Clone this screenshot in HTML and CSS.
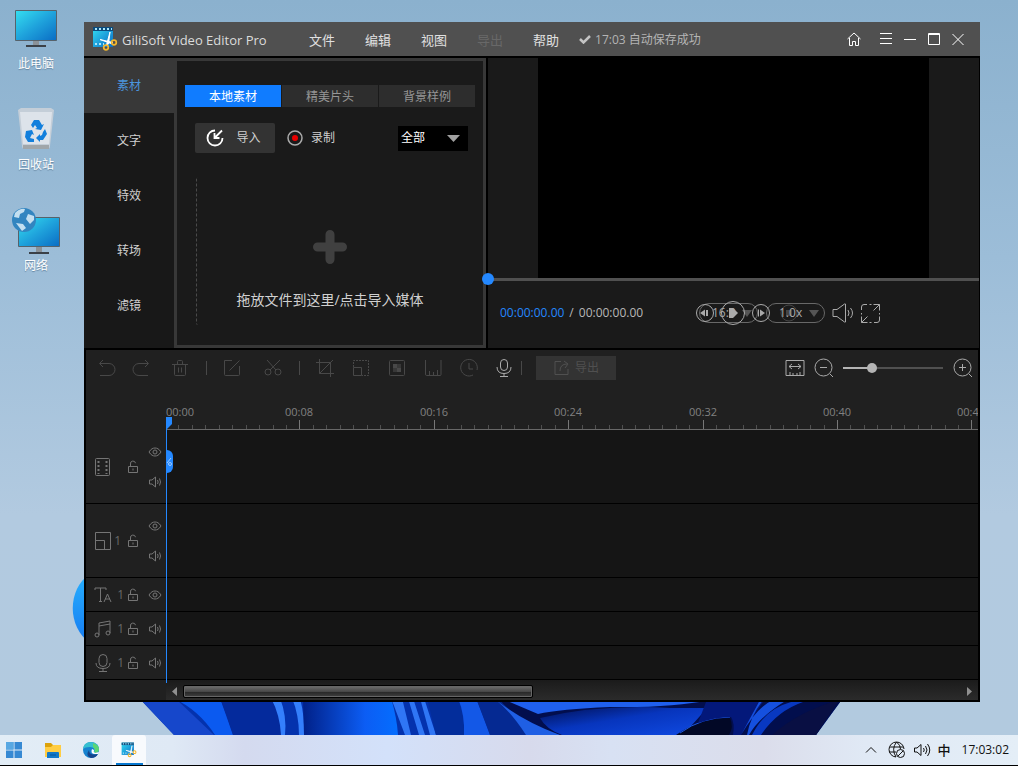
FILE: index.html
```html
<!DOCTYPE html>
<html lang="zh-CN">
<head>
<meta charset="utf-8">
<meta name="viewport" content="width=device-width, initial-scale=1">
<title>GiliSoft Video Editor Pro</title>
<link rel="stylesheet" href="styles.css">
</head>
<body>
<svg width="0" height="0" class="defs" aria-hidden="true">
  <defs>
    <linearGradient id="screen" x1="0" y1="0" x2="1" y2="1"><stop offset="0" stop-color="#35dff0"/><stop offset=".5" stop-color="#1fa3dc"/><stop offset="1" stop-color="#0a6cc4"/></linearGradient>
    <symbol id="lock" viewBox="0 0 12 14"><path d="M1.5 6.500h9v6h-9zM3.500 6V4a2.500 2.500 0 0 1 5-.8M6 8.500v2"/></symbol>
    <symbol id="eye" viewBox="0 0 14 10"><path d="M1 5C3 1.800 5 1 7 1s4 .8 6 4C11 8.200 9 9 7 9S3 8.200 1 5z"/><circle cx="7" cy="5" r="2"/></symbol>
    <symbol id="speaker" viewBox="0 0 14 12"><path d="M1.500 4v4H4l3.500 3V1L4 4zM9.500 4q1.300 2 0 4M11.500 2.500q2 3.500 0 7"/></symbol>
    <symbol id="logo" viewBox="0 0 26 26"><path d="M1 1h20v20H1z" fill="url(#screen)"/><path d="M1 3h20" stroke="#0b4b7c" stroke-width="4"/><path d="M3 3h17M3 18h9" stroke="#a9e6fa" stroke-width="2" stroke-dasharray="2 2"/><path d="M8 13.500l13 3-2 1zM18 6l-3.500 13 2-1z" fill="#fff" stroke="#fff"/><circle cx="22" cy="16.500" r="2.300" fill="none" stroke="#f5b72c" stroke-width="1.700"/><circle cx="14" cy="21.500" r="2.300" fill="none" stroke="#f5b72c" stroke-width="1.700"/></symbol>
  </defs>
</svg>
<main class="desktop">
  <svg class="wallpaper" viewBox="0 0 1018 735" preserveAspectRatio="none" aria-hidden="true">
    <defs>
      <linearGradient id="sky" x1="0" y1="0" x2="0" y2="1"><stop offset="0" stop-color="#8bb1ce"/><stop offset=".35" stop-color="#9cbdd8"/><stop offset=".7" stop-color="#b2cae0"/><stop offset="1" stop-color="#b2cadf"/></linearGradient>
      <linearGradient id="glow" x1="300" x2="400" y1="0" y2="0" gradientUnits="userSpaceOnUse"><stop offset="0" stop-color="#001d82"/><stop offset=".65" stop-color="#0c5df4"/><stop offset="1" stop-color="#046fff"/></linearGradient>
      <linearGradient id="fold" x1="0" y1="0" x2="1" y2="1"><stop offset="0" stop-color="#010f50"/><stop offset=".45" stop-color="#0735bd"/><stop offset="1" stop-color="#104be3"/></linearGradient>
      <linearGradient id="petal" x1="0" y1="0" x2="0" y2="1"><stop offset="0" stop-color="#27b0ff"/><stop offset="1" stop-color="#167bf1"/></linearGradient>
    </defs>
    <path d="M0 0h1018v735H0z" fill="url(#sky)"/>
    <path d="M90 574c-23 15-23 53 0 69z" fill="url(#petal)"/>
    <path d="M139 698h704l-27 37H174z" fill="#0432ad"/>
    <path d="M139 698h36l39 37h-40z" fill="#1647cb"/>
    <path d="M173 698h47q7 17 13 37h-18q-16-25-42-37z" fill="#0b5af0"/>
    <path d="M220 698h53q9 15 9 37h-49z" fill="#042a9c"/>
    <path d="M271 698h9q7 18 5 37h-4q-1-20-10-37zM292 698h8q5 20 4 37h-5q0-20-7-37z" fill="#347ffc"/>
    <path d="M303 698h88q6 20 7 37h-94z" fill="url(#glow)"/>
    <path d="M391 698h11l9 37h-6zM408 698h5l12 37h-6zM420 698h4l12 37h-6z" fill="#2f76f5"/>
    <path d="M427 698h31q7 20 6 37h-28z" fill="#032d9b"/>
    <path d="M458 698h18q8 20 14 37h-26q1-20-6-37z" fill="#1358e7"/>
    <path d="M476 698h22q16 17 40 37h-48z" fill="#052992"/>
    <path d="M498 698h345l-27 37H560q-40-10-62-37z" fill="#020e4d"/>
    <path d="M496 700q15 12 30 35h34q-36-13-64-35z" fill="#1f5fe4"/>
    <path d="M505 700h205q-38 8-100 7-50 2-72 7z" fill="#1f60ee"/>
    <path d="M540 718q60-14 130-10h38l-8 8-17 19H562q-16-6-22-17z" fill="url(#fold)"/>
    <path d="M676 735q24-17 54-17 4 9-1 17z" fill="#020826"/>
    <path d="M680 733q22-16 50-16" fill="none" stroke="#1c58df"/>
    <path d="M706 702h57l-22 33h-8q2-12-2-18-16 0-33 6z" fill="#03187a"/>
    <path d="M760 700l-19 35h6q3-18 16-35zM787 700q-28 17-38 35h-8q16-28 32-35z" fill="#1550df"/>
    <path d="M803 702q-26 9-42 33h-9q13-26 39-33z" fill="#0838c1"/>
    <path d="M839 700l-23 35h-44q27-24 67-35z" fill="#090f43"/>
  </svg>

  <div class="shortcuts">
    <a class="shortcut" href="#pc">
      <svg viewBox="0 0 56 48"><path d="M7.500 4.500h41v30h-41z" fill="url(#screen)" stroke="#56626b"/><path d="M25 35h6v4h-6z" fill="#8b9298"/><path d="M18 39h20v2H18z" fill="#3b4148"/></svg>
      <span>此电脑</span>
    </a>
    <a class="shortcut" href="#bin">
      <svg viewBox="0 0 56 48"><path d="M10 3l3-2h30l3 2-4 36q0 3-3 3H17q-3 0-3-3z" fill="#c4ced8"/><path d="M12 5h32l-3 32H15z" fill="#dde3ea"/><path d="M15 38h26v4H15z" fill="#a0a6aa"/><path d="M23 18l3-5h5l3 5 2-1-3 6-6-1 2-1-2-3-2 3zM18 24l6-1 2 5-2-1-2 4 4 1v3h-6l-3-5zM37 22l2 5-4 6h-3v2l-4-4 4-4v2l2-1 1-3z" fill="#127fdc"/></svg>
      <span>回收站</span>
    </a>
    <a class="shortcut" href="#network">
      <svg viewBox="0 0 56 48"><path d="M10.500 9.500h41v29h-41z" fill="url(#screen)" stroke="#56626b"/><path d="M28 39h6v5h-6z" fill="#8b9298"/><path d="M21 44h20v2H21z" fill="#3b4148"/><circle cx="16" cy="12" r="12" fill="#3285c0"/><path d="M7 5q5-5 10-4l-1 3-4 2-1 4-5-1zM20 6l6 2v4l-4 4-4-5zM8 15l7 1 3 4-4 3z" fill="#c3dff0"/></svg>
      <span>网络</span>
    </a>
  </div>

  <section class="window">
    <header class="titlebar">
      <div class="brand"><svg class="logo"><use href="#logo"/></svg><h1>GiliSoft Video Editor Pro</h1></div>
      <nav class="menu">
        <button>文件</button><button>编辑</button><button>视图</button><button disabled>导出</button><button>帮助</button>
      </nav>
      <div class="autosave"><svg viewBox="0 0 12 10"><path d="M1 5l3.500 3.500L11 2" fill="none" stroke="#c4c4c4" stroke-width="2.500"/></svg><span>17:03 自动保存成功</span></div>
      <div class="window-buttons">
        <button class="home" aria-label="主页"><svg viewBox="0 0 14 14"><path d="M.5 7L7 1l6.500 6M2.500 6v7.500h3v-4h3v4h3V6"/></svg></button>
        <button aria-label="菜单"><svg viewBox="0 0 14 14"><path d="M1 1.500h12M1 6.500h12M1 11.500h12"/></svg></button>
        <button aria-label="最小化"><svg viewBox="0 0 14 14"><path d="M1 7.500h12"/></svg></button>
        <button aria-label="最大化"><svg viewBox="0 0 14 14"><path d="M1.500 1.500h11v11h-11zM1 2.500h12"/></svg></button>
        <button aria-label="关闭"><svg viewBox="0 0 14 14"><path d="M1.500 2l11 11M12.500 2l-11 11"/></svg></button>
      </div>
    </header>

    <div class="upper">
      <nav class="sidebar">
        <button class="active">素材</button><button>文字</button><button>特效</button><button>转场</button><button>滤镜</button>
      </nav>
      <section class="library">
        <div class="tabs" role="tablist">
          <button role="tab" aria-selected="true">本地素材</button><button role="tab" aria-selected="false">精美片头</button><button role="tab" aria-selected="false">背景样例</button>
        </div>
        <div class="library-actions">
          <button class="import"><svg viewBox="0 0 18 18"><path d="M9 1.500a7.500 7.500 0 1 0 7.500 7.500" fill="none" stroke="#fff" stroke-width="1.800"/><path d="M16 1.500L9.500 8M8.500 4v5h5" fill="none" stroke="#fff" stroke-width="1.800"/></svg>导入</button>
          <button class="record"><svg viewBox="0 0 16 16"><circle cx="8" cy="8" r="7" fill="none" stroke="#aaa" stroke-width="1.500"/><circle cx="8" cy="8" r="3" fill="#e80000"/></svg>录制</button>
          <div class="filter"><select aria-label="素材类型"><option>全部</option></select><svg viewBox="0 0 13 8"><path d="M0 0h13L6.500 7z" fill="#a0a0a0"/></svg></div>
        </div>
        <button class="dropzone">
          <svg viewBox="0 0 34 34"><path d="M17 4.500v25M4.500 17h25" stroke="#404040" stroke-width="9" stroke-linecap="round"/></svg>
          <span>拖放文件到这里/点击导入媒体</span>
        </button>
      </section>
      <section class="preview">
        <div class="video"></div>
        <input class="seek" type="range" min="0" max="100" value="0" aria-label="播放进度">
        <div class="player">
          <div class="time"><span class="current">00:00:00.00</span><span>/</span><span>00:00:00.00</span></div>
          <div class="player-controls">
            <div class="pills">
              <div class="pill"><select aria-label="画面比例"><option>16:9</option></select><svg viewBox="0 0 10 7"><path d="M0 0h10L5 7z"/></svg></div>
              <div class="pill"><select aria-label="播放速度"><option>1.0x</option></select><svg viewBox="0 0 10 7"><path d="M0 0h10L5 7z"/></svg></div>
              <div class="transport">
                <button aria-label="上一帧"><svg viewBox="0 0 26 26"><circle cx="13" cy="13" r="8.500"/><path class="fill" d="M8 13l5-3.500v7zM14 10h2v6h-2z"/></svg></button>
                <button aria-label="播放"><svg viewBox="0 0 26 26"><circle cx="13" cy="13" r="11.500"/><path class="fill" d="M9 8h4l5 5-5 5H9z"/></svg></button>
                <button aria-label="下一帧"><svg viewBox="0 0 26 26"><circle cx="13" cy="13" r="8.500"/><path class="fill" d="M10 9.500v7h1v-7zM12 9.500v7l5-3.500z"/></svg></button>
                <button aria-label="停止" disabled><svg viewBox="0 0 26 26"><circle cx="13" cy="13" r="8"/><path class="fill" d="M10 10h6v6h-6z"/></svg></button>
              </div>
            </div>
            <button aria-label="音量"><svg width="22" height="20" viewBox="0 0 22 20"><path d="M1 6.500v7h4L12.500 19h1V1h-1L5 6.500zM16 7q2 3 0 6M18.500 5q4 5 0 10"/></svg></button>
            <button aria-label="全屏"><svg width="19" height="19" viewBox="0 0 19 19"><path d="M.5 6V3q0-2.500 2.500-2.500h3M12.500.5h6v6M18.500 12.500V16q0 2.500-2.500 2.500h-3M6.500 18.500h-6v-6M8.500.5h2M8.500 18.500h2M.5 9v1.500M18.500 9v1.500M12.500 6.500l6-6M6.500 12.500l-6 6"/></svg></button>
          </div>
        </div>
      </section>
    </div>

    <section class="timeline">
      <div class="toolbar">
        <div class="tools">
          <button disabled aria-label="撤销"><svg viewBox="0 0 20 20"><path d="M6 2L2.500 5.500 6 9M3 5.500h9a5.500 5.500 0 0 1 0 12H3"/></svg></button>
          <button disabled aria-label="重做"><svg viewBox="0 0 20 20"><path d="M14 2l3.500 3.500L14 9M17 5.500H8a5.500 5.500 0 0 0 0 12h9"/></svg></button>
          <button disabled aria-label="删除"><svg viewBox="0 0 20 20"><path d="M2 6.500h16M7.500 6V3.500q0-1 1-1h3q1 0 1 1V6M4.500 6.500v10q0 1 1 1h9q1 0 1-1v-10M8.500 9.500v5M11.500 9.500v5"/></svg></button>
          <i class="rule"></i>
          <button disabled aria-label="编辑"><svg viewBox="0 0 20 20"><path d="M10 2.500H2.500v14q0 1 1 1h13q1 0 1-1V8M7.500 12.500l10-10"/></svg></button>
          <button disabled aria-label="分割"><svg viewBox="0 0 20 20"><circle cx="5" cy="14" r="3"/><circle cx="15" cy="14" r="3"/><path d="M4 2l9 10M17 2L7 12"/></svg></button>
          <i class="rule"></i>
          <button disabled aria-label="裁剪"><svg viewBox="0 0 20 20"><path d="M1 4.500h14.500V19M4.500 1v14.500H19M18 2L4.500 15.500"/></svg></button>
          <button disabled aria-label="缩放"><svg viewBox="0 0 20 20"><path d="M2.500 9V2.500h15v15H11" stroke-dasharray="2 1"/><path d="M2.500 9.500h8v8h-8z"/></svg></button>
          <button disabled aria-label="马赛克"><svg viewBox="0 0 20 20"><rect x="2.500" y="2.500" width="15" height="15" rx="1"/><path d="M6 6h4v4H6zM10 10h4v4h-4z" fill="#484848" stroke="none"/><path d="M10 6h4v4h-4zM6 10h4v4H6z" fill="#383838" stroke="none"/></svg></button>
          <button disabled aria-label="标尺"><svg viewBox="0 0 20 20"><path d="M2.500 2v14q0 1.500 1 1.500h13.500q1 0 1-1V2M6.500 17v-4M10.500 17v-3M14.500 17v-5"/></svg></button>
          <button disabled aria-label="时长"><svg viewBox="0 0 20 20"><path d="M14 17A8.300 8.300 0 1 1 18 12M10 5v6h4"/></svg></button>
          <button class="bright" aria-label="录音"><svg viewBox="0 0 20 20"><rect x="6.500" y="1.500" width="7" height="11" rx="3.500"/><path d="M3 9q0 6.500 7 6.500T17 9M10 15.500V18M6 18.500h8"/></svg></button>
          <i class="rule"></i>
        </div>
        <button class="export" disabled><svg viewBox="0 0 18 18"><path d="M8 2.500H2v13h13V10M7 12q0-7 7-7M11 2l4 3-3 4"/></svg>导出</button>
        <div class="zoom">
          <button class="bright" aria-label="适应窗口"><svg viewBox="0 0 20 20"><path d="M1 2.500h18v15H1zM5 17v-3M8 17v-2M12 17v-2M15 17v-3M4 8.500h12M7 6L4 8.500 7 11M13 6l3 2.500-3 2.500"/></svg></button>
          <button class="bright" aria-label="缩小"><svg viewBox="0 0 20 20"><circle cx="9.500" cy="9.500" r="8.500"/><path d="M6 9.500h7M16 16l3 3"/></svg></button>
          <input class="scale" type="range" min="0" max="100" value="27" aria-label="时间线缩放">
          <button class="bright" aria-label="放大"><svg viewBox="0 0 20 20"><circle cx="9.500" cy="9.500" r="8.500"/><path d="M6 9.500h7M9.500 6v7M16 16l3 3"/></svg></button>
        </div>
      </div>

      <div class="tracks">
        <div class="ruler">
          <svg height="44" aria-label="时间刻度">
            <text x="0" y="30">00:00</text>
            <g text-anchor="middle"><text x="133" y="30">00:08</text><text x="268" y="30">00:16</text><text x="402" y="30">00:24</text><text x="537" y="30">00:32</text><text x="671" y="30">00:40</text><text x="805" y="30">00:48</text></g>
            <path class="minor" d="M12.5 39v4M26.5 39v4M39.5 39v4M53.5 39v4M66.5 39v4M80.5 39v4M93.5 39v4M107.5 39v4M120.5 39v4M147.5 39v4M160.5 39v4M174.5 39v4M187.5 39v4M201.5 39v4M214.5 39v4M228.5 39v4M241.5 39v4M254.5 39v4M281.5 39v4M295.5 39v4M308.5 39v4M322.5 39v4M335.5 39v4M348.5 39v4M362.5 39v4M375.5 39v4M389.5 39v4M416.5 39v4M429.5 39v4M443.5 39v4M456.5 39v4M469.5 39v4M483.5 39v4M496.5 39v4M510.5 39v4M523.5 39v4M550.5 39v4M563.5 39v4M577.5 39v4M590.5 39v4M604.5 39v4M617.5 39v4M631.5 39v4M644.5 39v4M658.5 39v4M684.5 39v4M698.5 39v4M711.5 39v4M725.5 39v4M738.5 39v4M752.5 39v4M765.5 39v4M779.5 39v4M792.5 39v4"/>
            <path class="major" d="M133.5 34v9M268.5 34v9M402.5 34v9M537.5 34v9M671.5 34v9M805.5 34v9"/>
          </svg>
        </div>
        <div class="track tall">
          <div class="head"><svg class="kind" viewBox="0 0 18 18"><rect x="1.500" y=".5" width="14" height="17" rx="1"/><path d="M4.500 3v13M12.500 3v13" stroke-width="2" stroke-dasharray="2 2"/></svg><span></span><button aria-label="锁定"><svg class="lock"><use href="#lock"/></svg></button><div class="toggles"><button aria-label="显示"><svg class="eye"><use href="#eye"/></svg></button><button aria-label="静音"><svg class="speaker"><use href="#speaker"/></svg></button></div></div>
          <div class="lane"></div>
        </div>
        <div class="track tall">
          <div class="head"><svg class="kind" viewBox="0 0 18 18"><path d="M1.500.5h15v17h-15zM1.500 8.500h9v9"/></svg><span class="near">1</span><button aria-label="锁定"><svg class="lock"><use href="#lock"/></svg></button><div class="toggles"><button aria-label="显示"><svg class="eye"><use href="#eye"/></svg></button><button aria-label="静音"><svg class="speaker"><use href="#speaker"/></svg></button></div></div>
          <div class="lane"></div>
        </div>
        <div class="track">
          <div class="head"><svg class="kind" viewBox="0 0 18 18"><path d="M1 4V2h11v2M6.500 2v13M5 15.500h3M10 16l3.500-8 3.500 8M11 13h5"/></svg><span>1</span><button aria-label="锁定"><svg class="lock"><use href="#lock"/></svg></button><div class="toggles"><button aria-label="显示"><svg class="eye"><use href="#eye"/></svg></button></div></div>
          <div class="lane"></div>
        </div>
        <div class="track">
          <div class="head"><svg class="kind" viewBox="0 0 18 18"><path d="M5 15V3l11-2v12M5 6l11-2"/><circle cx="3" cy="15" r="2"/><circle cx="14" cy="13" r="2"/></svg><span>1</span><button aria-label="锁定"><svg class="lock"><use href="#lock"/></svg></button><div class="toggles"><button aria-label="静音"><svg class="speaker"><use href="#speaker"/></svg></button></div></div>
          <div class="lane"></div>
        </div>
        <div class="track">
          <div class="head"><svg class="kind" viewBox="0 0 18 18"><rect x="5" y=".5" width="8" height="12" rx="4"/><path d="M2 9q0 5.500 7 5.500T16 9M9 14.500V17M5 17.500h8"/></svg><span>1</span><button aria-label="锁定"><svg class="lock"><use href="#lock"/></svg></button><div class="toggles"><button aria-label="静音"><svg class="speaker"><use href="#speaker"/></svg></button></div></div>
          <div class="lane"></div>
        </div>
        <div class="playhead">
          <svg class="marker" viewBox="0 0 6 12"><path d="M0 0h6v7l-5 5H0z" fill="#2488ff"/></svg>
          <button class="split" aria-label="在此分割"><svg viewBox="0 0 7 24"><path d="M5 8L1 13" stroke="#9ccaff"/><circle cx="4" cy="14" r="1.500" fill="none" stroke="#9ccaff"/></svg></button>
        </div>
        <div class="scroll">
          <button aria-label="向左滚动"><svg viewBox="0 0 5 9"><path d="M5 0v9L0 4.500z"/></svg></button>
          <div class="groove"><div class="thumb"></div></div>
          <button aria-label="向右滚动"><svg viewBox="0 0 5 9"><path d="M0 0v9l5-4.500z"/></svg></button>
        </div>
      </div>
    </section>
  </section>
</main>

<footer class="taskbar">
  <div class="pinned">
    <button aria-label="开始"><svg viewBox="0 0 18 18"><path d="M1 1h7.500v7.500H1zM9.500 1H17v7.500H9.500zM1 9.500h7.500V17H1zM9.500 9.500H17V17H9.500z" fill="#3689d3"/><path d="M1 1h7.500v7.500H1z" fill="#58a8e2"/></svg></button>
    <button aria-label="文件资源管理器"><svg viewBox="0 0 18 18"><path d="M1 2h6l2 2h8v3H1z" fill="#dca20c"/><path d="M1 6h6l2-2h8v12H1z" fill="#ffcd43"/><path d="M3 12q0-1 1-1h10q1 0 1 1v5H3z" fill="#1278c7"/><path d="M6 14h6" stroke="#07559a"/></svg></button>
    <button aria-label="Edge"><svg viewBox="0 0 18 18"><circle cx="9" cy="9" r="8" fill="#1682cf"/><path d="M1 8q1-7 8-7 8 1 8 7 0 4-5 4 2-6-4-6-5 0-7 2z" fill="#35bfd0"/><path d="M11 2q6 2 6 6t-5 4q2-4-1-6z" fill="#5bd575"/><path d="M7 9q0 6 9 4-2 4-7 4-6-2-2-8z" fill="#16458c"/><path d="M10 8q-2 5 3 5h3l1-2-4 1q-2-1-1-3z" fill="#fff"/></svg></button>
    <button class="running" aria-label="GiliSoft Video Editor Pro"><svg viewBox="0 0 26 26"><use href="#logo" width="26" height="26"/></svg></button>
  </div>
  <div class="tray">
    <button aria-label="显示隐藏的图标"><svg width="12" height="8" viewBox="0 0 12 8"><path d="M1 6.500l5-5 5 5"/></svg></button>
    <button aria-label="网络"><svg width="18" height="18" viewBox="0 0 18 18"><path d="M8 16A7.500 7.500 0 1 1 16 8M2 6h13M1 11h7M8.500 1Q3 8 8 16M8.500 1q4 3 4 7"/><circle cx="12.500" cy="12.500" r="4"/><path d="M10 15l5-5"/></svg></button>
    <button aria-label="音量"><svg width="18" height="16" viewBox="0 0 18 16"><path d="M1.500 6v4H4l4 3.500v-11L4 6zM10.500 6q1.500 2 0 4M12.500 4q3 4 0 8M14.500 2q4.500 6 0 12"/></svg></button>
    <button class="ime">中</button>
    <time>17:03:02</time>
  </div>
</footer>
</body>
</html>
```

FILE: styles.css
```css
* { box-sizing: border-box; }

html, body { height: 100%; }

body {
  margin: 0;
  display: flex;
  flex-direction: column;
  font: 12px/18px "Open Sans", "Noto Sans CJK SC", sans-serif;
  color: #d0d0d0;
  background: #b2cadf;
}

button, select, input { font: inherit; color: inherit; margin: 0; }

button {
  display: flex;
  align-items: center;
  justify-content: center;
  padding: 0;
  border: 0;
  background: none;
}

svg { display: block; flex: none; }
.defs { position: absolute; }

/* Desktop */
.desktop { position: relative; flex: 1; min-height: 702px; }
.wallpaper { position: absolute; inset: 0; width: 100%; height: 100%; }

.shortcuts { position: relative; width: 72px; }
.shortcut {
  display: flex;
  flex-direction: column;
  align-items: center;
  gap: 1px;
  height: 101px;
  padding-top: 6px;
  color: #fff;
  text-decoration: none;
}
.shortcut svg { width: 56px; height: 48px; }
.shortcut span { text-shadow: 0 1px 1px #6484a0; }

/* Application window */
.window {
  position: absolute;
  top: 22px;
  left: 84px;
  right: 38px;
  display: flex;
  flex-direction: column;
  gap: 2px;
  background: #000;
}

.titlebar {
  display: flex;
  align-items: center;
  height: 34px;
  padding: 0 10px 0 8px;
  background: #505050;
  font-size: 13px;
  line-height: 20px;
}
.brand { display: flex; align-items: center; gap: 4px; width: 217px; }
.brand h1 { margin: 0; padding-top: 2px; font-size: 13px; font-weight: 400; color: #dcdcdc; white-space: nowrap; }
.logo { width: 26px; height: 26px; }
.menu { display: flex; gap: 30px; color: #e0e0e0; }
.menu button { padding-top: 1px; }
.menu button:disabled { color: #686868; }
.autosave { display: flex; align-items: center; gap: 4px; margin-left: 20px; font-size: 12px; color: #b4b4b4; }
.autosave span { padding-top: 2px; }
.autosave svg { width: 12px; height: 10px; }
.window-buttons { display: flex; margin-left: auto; }
.window-buttons button { width: 24px; height: 24px; }
.window-buttons svg { width: 14px; height: 14px; fill: none; stroke: #fff; }
.window-buttons .home { margin-right: 8px; }

.upper { display: flex; min-height: 290px; }

.sidebar { width: 90px; background: #181818; }
.sidebar button { width: 90px; height: 55px; padding-top: 1px; }
.sidebar .active { background: #383838; color: #4b95dc; }

/* Media library */
.library {
  display: flex;
  flex-direction: column;
  width: 312px;
  padding: 24px 8px 20px;
  border: 3px solid #383838;
  background: #1a1a1a;
}
.tabs { display: grid; grid-template-columns: repeat(3, 1fr); gap: 1px; }
.tabs button { height: 22px; padding-top: 1px; background: #2d2d2d; color: #969696; }
.tabs button[aria-selected="true"] { background: #107cff; color: #fff; }
.library-actions { display: flex; align-items: center; gap: 12px; margin: 16px 7px 24px 10px; }
.import { gap: 12px; width: 80px; height: 30px; padding-right: 3px; border-radius: 2px; background: #333; }
.import svg { width: 18px; height: 18px; }
.record { gap: 8px; }
.record svg { width: 16px; height: 16px; }
.filter { position: relative; margin-left: auto; }
.filter select {
  display: block;
  width: 70px;
  height: 25px;
  padding: 0 3px;
  border: 0;
  appearance: none;
  background: #000;
  color: #fff;
}
.filter svg { position: absolute; right: 8px; top: 9px; width: 13px; height: 8px; pointer-events: none; }
.dropzone {
  flex: 1;
  flex-direction: column;
  gap: 27px;
  margin: 0 12px 0 11px;
  padding-top: 37px;
  border-left: 1px dashed #4a4a4a;
  border-radius: 2px;
  font-size: 14px;
}
.dropzone svg { width: 34px; height: 34px; }

/* Preview player */
.preview { flex: 1; min-width: 0; display: flex; flex-direction: column; margin: 0 1px 0 2px; background: #1a1a1a; }
.video { height: 220px; margin: 0 50px; background: #000; }
.seek, .scale { display: block; appearance: none; background: none; }
.seek { position: relative; z-index: 1; width: calc(100% + 6px); height: 11px; margin: -4px 0 0 -6px; }
.seek::-webkit-slider-runnable-track { height: 3px; background: linear-gradient(90deg, transparent 6px, #505050 6px); }
.seek::-webkit-slider-thumb { appearance: none; width: 12px; height: 12px; margin-top: -5px; border-radius: 50%; background: #2488ff; }
.player { display: flex; align-items: center; justify-content: space-between; height: 56px; padding: 0 99px 0 12px; }
.time { display: flex; gap: 5px; color: #b8b8b8; }
.current { color: #2488ff; }
.player-controls { display: flex; align-items: center; gap: 7px; }
.player-controls svg { fill: none; stroke: #aaa; }
.pills { position: relative; display: flex; gap: 8px; }
.pill { position: relative; }
.pill select {
  display: block;
  width: 59px;
  height: 20px;
  padding: 0 0 0 12px;
  border: 1px solid #686868;
  border-radius: 10px;
  appearance: none;
  background: none;
  color: #aaa;
}
.pill svg { position: absolute; right: 6px; top: 7px; width: 10px; height: 7px; fill: #555; stroke: none; pointer-events: none; }
.transport { position: absolute; left: -8px; top: -3px; display: grid; grid-template-columns: repeat(4, 28px); }
.transport svg { width: 26px; height: 26px; }
.transport .fill { fill: #aaa; stroke: none; }
.transport button:disabled { opacity: .3; }

/* Timeline */
.timeline { margin: 0 2px 2px; background: #202020; }
.toolbar { display: flex; align-items: center; height: 36px; padding: 0 5px 0 4px; }
.tools { display: grid; grid-template-columns: 34px 34px 44px 8px 44px 38px 14px 38px 34px 38px 34px 38px 32px 2px; align-items: center; }
.tools svg, .zoom svg { width: 20px; height: 20px; fill: none; stroke: #484848; }
.toolbar .bright svg { stroke: #aaa; }
.rule { justify-self: center; width: 1px; height: 14px; background: #484848; }
.export { gap: 4px; width: 80px; height: 24px; margin-left: 14px; background: #333; color: #505050; }
.export svg { width: 18px; height: 18px; fill: none; stroke: #505050; }
.zoom { display: flex; align-items: center; gap: 9px; margin-left: auto; }
.scale { width: 100px; height: 12px; margin-right: 1px; }
.scale::-webkit-slider-runnable-track { height: 2px; background: linear-gradient(90deg, #b4b4b4 28%, #505050 28%); }
.scale::-webkit-slider-thumb { appearance: none; width: 10px; height: 10px; margin-top: -4px; border-radius: 50%; background: #b4b4b4; }

.tracks { position: relative; }
.ruler { height: 44px; padding-left: 80px; }
.ruler svg { width: 100%; border-bottom: 1px solid #686868; }
.ruler text { font-size: 11px; fill: #808080; }
.ruler path { stroke: #505050; }
.ruler .major { stroke: #787878; }

.track { display: flex; height: 34px; border-bottom: 1px solid #000; }
.track.tall { height: 74px; }
.lane { flex: 1; background: #151515; }
.head {
  display: grid;
  grid-template-columns: 18px 15px 12px 16px;
  align-items: center;
  width: 80px;
  padding-left: 8px;
  color: #686868;
}
.head svg { fill: none; stroke: #757575; }
.head span { padding-right: 3px; text-align: right; }
.head .near { padding-right: 6px; }
.kind { width: 18px; height: 18px; }
.lock { width: 12px; height: 14px; }
.eye { width: 14px; height: 10px; }
.speaker { width: 14px; height: 12px; }
.toggles { display: grid; gap: 18px; width: 14px; margin-left: 9px; }
.toggles button { height: 12px; }

.playhead { position: absolute; top: 31px; bottom: 17px; left: 80px; width: 1px; background: #2488ff; }
.marker { width: 6px; height: 12px; }
.split { width: 7px; height: 23px; margin-top: 21px; border-radius: 0 6px 6px 0; background: #2488ff; }
.split svg { width: 7px; height: 24px; }

.scroll { display: flex; align-items: center; height: 20px; padding-top: 2px; margin-left: 80px; background: linear-gradient(#1b1b1b, #2b2b2b); }
.scroll button { width: 17px; height: 18px; }
.scroll svg { width: 5px; height: 9px; fill: #909090; }
.groove { flex: 1; }
.thumb { width: 45%; height: 13px; border: 1px solid #000; border-radius: 2px; background: linear-gradient(#707070, #484848 50%, #282828 55%, #404040); box-shadow: inset 0 0 0 1px #666; }

/* Taskbar */
.taskbar {
  display: flex;
  align-items: center;
  justify-content: space-between;
  height: 31px;
  padding: 0 9px 0 0;
  border-bottom: 1px solid #000;
  background: linear-gradient(90deg, #e2edf6, #dfe9f5 17%, #d4daef 24%, #d3e1fa 38%, #d7daec 52%, #d8e1f3 60%, #dbddeb 75%, #e0e9f5 85%, #e4eef7);
  color: #111;
}
.pinned { display: flex; align-items: center; gap: 4px; }
.pinned button { width: 34px; height: 30px; }
.pinned button:first-child { width: 32px; padding-right: 4px; }
.pinned svg { width: 18px; height: 18px; }
.pinned .running { border-radius: 3px 3px 0 0; background: linear-gradient(#0878d0, #0878d0) center bottom / 27px 2px no-repeat, #f8fafd; }
.pinned .running svg { width: 16px; height: 16px; }
.tray { display: flex; align-items: center; gap: 7px; }
.tray svg { fill: none; stroke: #111; }
.tray button:first-child { margin-right: 4px; }
.ime { font-size: 13px; font-weight: 500; }
.tray time { margin-left: 4px; }
```
